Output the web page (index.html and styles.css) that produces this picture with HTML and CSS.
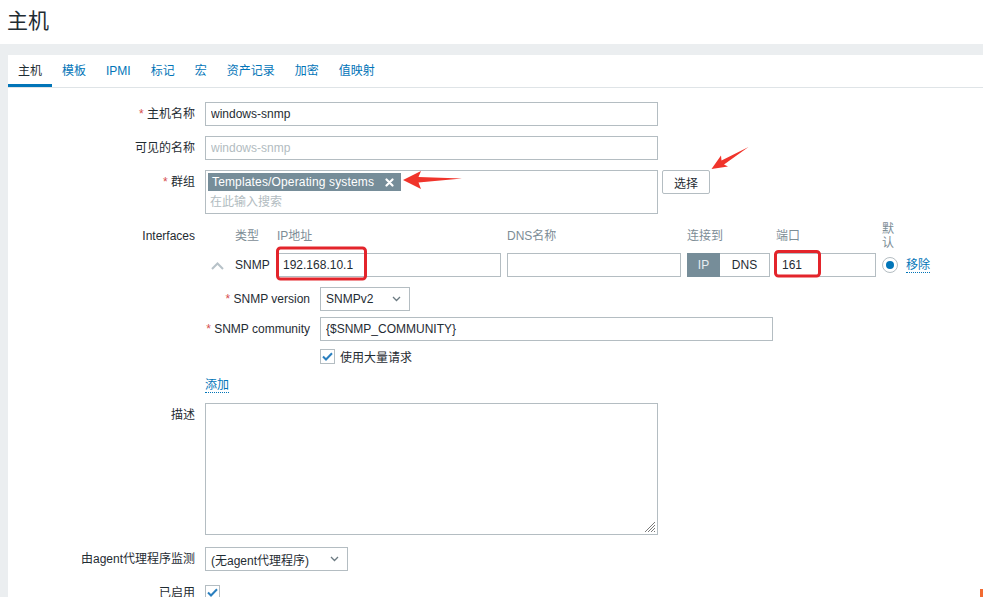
FILE: index.html
```html
<!DOCTYPE html>
<html lang="zh-CN">
<head>
    <meta charset="UTF-8">
    <meta name="viewport" content="width=device-width, initial-scale=1.0">
    <title>主机</title>
    <link rel="stylesheet" href="styles.css">
</head>
<body>
    <header class="page-header">
        <h1>主机</h1>
    </header>
    <main class="page-body">
        <div class="panel">
            <ul class="tabs">
                <li class="tab active">主机</li>
                <li class="tab">模板</li>
                <li class="tab">IPMI</li>
                <li class="tab">标记</li>
                <li class="tab">宏</li>
                <li class="tab">资产记录</li>
                <li class="tab">加密</li>
                <li class="tab">值映射</li>
            </ul>
            <form class="host-form">
                <label class="form-label"><span class="req">*</span> 主机名称</label>
                <div class="form-field">
                    <input class="text-input wide" type="text" value="windows-snmp">
                </div>

                <label class="form-label">可见的名称</label>
                <div class="form-field">
                    <input class="text-input wide" type="text" placeholder="windows-snmp">
                </div>

                <label class="form-label"><span class="req">*</span> 群组</label>
                <div class="form-field group-field">
                    <div class="multiselect">
                        <span class="ms-tag">Templates/Operating systems
                            <svg class="ms-remove" width="9" height="9" viewBox="0 0 9 9"><path d="M1.5 1.5 L7.5 7.5 M7.5 1.5 L1.5 7.5" stroke="#fff" stroke-width="2.2" stroke-linecap="round"/></svg>
                        </span>
                        <input class="ms-search" type="text" placeholder="在此输入搜索">
                    </div>
                    <button class="btn" type="button">选择</button>
                </div>

                <label class="form-label">Interfaces</label>
                <div class="form-field interfaces">
                    <div class="iface-grid">
                        <span class="iface-head"></span>
                        <span class="iface-head">类型</span>
                        <span class="iface-head">IP地址</span>
                        <span class="iface-head">DNS名称</span>
                        <span class="iface-head">连接到</span>
                        <span class="iface-head">端口</span>
                        <span class="iface-head narrow">默认</span>
                        <span class="iface-head"></span>

                        <span class="caret">
                            <svg width="13" height="8" viewBox="0 0 13 8"><path d="M1 7 L6.5 1.5 L12 7" fill="none" stroke="#b7c2c8" stroke-width="2"/></svg>
                        </span>
                        <span class="iface-type">SNMP</span>
                        <input class="text-input" type="text" value="192.168.10.1">
                        <input class="text-input" type="text" value="">
                        <div class="toggle">
                            <span class="toggle-item on">IP</span>
                            <span class="toggle-item">DNS</span>
                        </div>
                        <input class="text-input" type="text" value="161">
                        <span class="radio"><span class="radio-dot"></span></span>
                        <a class="link">移除</a>
                    </div>

                    <div class="snmp-details">
                        <label class="form-label"><span class="req">*</span> SNMP version</label>
                        <div class="select version-select">
                            <span>SNMPv2</span>
                            <svg width="9" height="6" viewBox="0 0 9 6"><path d="M1 1 L4.5 4.5 L8 1" fill="none" stroke="#6b7a82" stroke-width="1.3"/></svg>
                        </div>

                        <label class="form-label"><span class="req">*</span> SNMP community</label>
                        <input class="text-input community" type="text" value="{$SNMP_COMMUNITY}">

                        <span></span>
                        <div class="check-row">
                            <span class="checkbox">
                                <svg width="11" height="9" viewBox="0 0 11 9"><path d="M1 4.5 L4 7.5 L10 1.2" fill="none" stroke="#2a7fbf" stroke-width="2"/></svg>
                            </span>
                            <span>使用大量请求</span>
                        </div>
                    </div>

                    <a class="link add-link">添加</a>
                </div>

                <label class="form-label">描述</label>
                <div class="form-field desc-field">
                    <div class="textarea-wrap">
                        <textarea class="textarea"></textarea>
                        <svg class="resize-grip" width="12" height="12" viewBox="0 0 12 12">
                            <path d="M11 1 L1 11 M11 4 L4 11 M11 7 L7 11 M11 10 L10 11" stroke="#7a7a7a" stroke-width="1"/>
                        </svg>
                    </div>
                </div>

                <label class="form-label">由agent代理程序监测</label>
                <div class="form-field">
                    <div class="select proxy-select">
                        <span>(无agent代理程序)</span>
                        <svg width="9" height="6" viewBox="0 0 9 6"><path d="M1 1 L4.5 4.5 L8 1" fill="none" stroke="#6b7a82" stroke-width="1.3"/></svg>
                    </div>
                </div>

                <label class="form-label">已启用</label>
                <div class="form-field enabled-field">
                    <span class="checkbox">
                        <svg width="11" height="9" viewBox="0 0 11 9"><path d="M1 4.5 L4 7.5 L10 1.2" fill="none" stroke="#2a7fbf" stroke-width="2"/></svg>
                    </span>
                </div>
            </form>
        </div>
    </main>

    <!-- red markup drawn over the screenshot -->
    <svg class="annotations" width="983" height="597" viewBox="0 0 983 597">
        <rect x="277.5" y="248" width="88" height="31" rx="3" fill="none" stroke="#e3242b" stroke-width="3"/>
        <rect x="775.5" y="251.5" width="44" height="24.5" rx="3" fill="none" stroke="#e3242b" stroke-width="3"/>
        <polygon points="403,180 421,171 418.5,177 462,178.5 418.5,182.5 421,189" fill="#f0342b"/>
        <polygon points="711.5,169 721,155.5 721.5,160.5 748.5,147 724,164.5 728,166.5" fill="#f0342b"/>
        <rect x="980" y="589" width="3" height="8" fill="#f26b32"/>
    </svg>
</body>
</html>
```

FILE: styles.css
```css
:root {
    --text-color: #1f2c33;
    --link-color: #0275b8;
    --muted-color: #7d8d96;
    --border-color: #b4bdc2;
    --page-bg: #ebeef0;
    --tag-bg: #768d99;
    --req-color: #d64e4e;
}

body {
    margin: 0;
    background: var(--page-bg);
    font-family: 'Liberation Sans', Arial, 'Noto Sans CJK SC', sans-serif;
    font-size: 12px;
    color: var(--text-color);
    overflow: hidden;
}

.page-header {
    background: #fff;
    height: 44px;
    padding-left: 7px;
}

.page-header h1 {
    margin: 0;
    font-size: 21px;
    font-weight: normal;
    line-height: 42px;
}

.page-body {
    padding: 11px 0 0 8px;
}

.panel {
    background: #fff;
    min-height: 560px;
}

.tabs {
    display: flex;
    list-style: none;
    margin: 0;
    padding: 0;
    height: 32px;
    border-bottom: 1px solid #dfe4e7;
}

.tab {
    padding: 0 10px;
    line-height: 32px;
    color: var(--link-color);
}

.tab.active {
    color: var(--text-color);
    box-shadow: inset 0 -3px 0 var(--link-color);
}

.host-form {
    display: grid;
    grid-template-columns: 187px 1fr;
    column-gap: 10px;
    row-gap: 10px;
    padding-top: 14px;
}

.form-label {
    text-align: right;
    padding-top: 4px;
    line-height: 16px;
    white-space: nowrap;
}

.req {
    color: var(--req-color);
}

.form-field {
    min-width: 0;
}

.text-input {
    box-sizing: border-box;
    height: 24px;
    border: 1px solid var(--border-color);
    padding: 0 5px;
    font: inherit;
    color: var(--text-color);
    background: #fff;
    outline: none;
    width: 100%;
}

.text-input::placeholder,
.ms-search::placeholder {
    color: #b2bcc1;
}

.text-input.wide {
    width: 453px;
}

.group-field {
    display: flex;
    align-items: flex-start;
    gap: 4px;
}

.multiselect {
    box-sizing: border-box;
    width: 453px;
    height: 44px;
    border: 1px solid var(--border-color);
    padding: 2px;
    display: flex;
    flex-direction: column;
    align-items: flex-start;
}

.ms-tag {
    display: inline-flex;
    align-items: center;
    gap: 11px;
    height: 18px;
    padding: 0 7px 0 4px;
    background: var(--tag-bg);
    color: #fff;
    line-height: 18px;
    letter-spacing: 0.15px;
}

.ms-search {
    border: none;
    outline: none;
    font: inherit;
    padding: 4px 0 0 2px;
    width: 300px;
}

.btn {
    box-sizing: border-box;
    height: 24px;
    width: 48px;
    border: 1px solid var(--border-color);
    background: #fff;
    font: inherit;
    color: var(--text-color);
    padding: 0;
    border-radius: 2px;
}

.interfaces {
    display: flex;
    flex-direction: column;
    align-items: flex-start;
}

.iface-grid {
    display: grid;
    grid-template-columns: 24px 36px 224px 174px 83px 100px 18px auto;
    grid-template-rows: 28px 24px;
    column-gap: 6px;
    row-gap: 1px;
    align-items: center;
}

.iface-head {
    align-self: start;
    padding-top: 4px;
    line-height: 16px;
    color: var(--muted-color);
    white-space: nowrap;
}

.iface-head.narrow {
    white-space: normal;
    line-height: 14px;
    padding-top: 0;
    margin-top: -2px;
    width: 14px;
}

.caret {
    display: flex;
    justify-content: center;
    padding-top: 2px;
}

.toggle {
    display: flex;
    height: 24px;
    box-sizing: border-box;
    border: 1px solid var(--border-color);
}

.toggle-item {
    flex: 1;
    text-align: center;
    line-height: 22px;
}

.toggle-item.on {
    flex: 0 0 33px;
    background: var(--tag-bg);
    color: #e8eef1;
    margin: -1px 0 -1px -1px;
    line-height: 24px;
}

.radio {
    box-sizing: border-box;
    width: 16px;
    height: 16px;
    border: 1px solid var(--border-color);
    border-radius: 50%;
    display: flex;
    align-items: center;
    justify-content: center;
}

.radio-dot {
    width: 8px;
    height: 8px;
    border-radius: 50%;
    background: var(--link-color);
}

.link {
    color: var(--link-color);
    border-bottom: 1px dotted var(--link-color);
    line-height: 14px;
    justify-self: start;
}

.snmp-details {
    display: grid;
    grid-template-columns: 105px auto;
    column-gap: 10px;
    row-gap: 6px;
    margin-top: 10px;
    align-items: center;
}

.snmp-details .form-label {
    padding-top: 0;
}

.select {
    box-sizing: border-box;
    height: 24px;
    border: 1px solid var(--border-color);
    padding: 0 8px 0 5px;
    display: flex;
    align-items: center;
    justify-content: space-between;
    background: #fff;
}

.version-select {
    width: 90px;
}

.proxy-select {
    width: 143px;
}

.community {
    width: 453px;
}

.check-row {
    display: flex;
    align-items: center;
    gap: 5px;
    margin-top: 1px;
}

.checkbox {
    box-sizing: border-box;
    width: 15px;
    height: 15px;
    border: 1px solid var(--border-color);
    display: flex;
    align-items: center;
    justify-content: center;
    background: #fff;
}

.add-link {
    margin-top: 13px;
}

.desc-field {
    padding-bottom: 2px;
}

.textarea-wrap {
    position: relative;
    width: 453px;
}

.textarea {
    display: block;
    box-sizing: border-box;
    width: 453px;
    height: 132px;
    border: 1px solid var(--border-color);
    font: inherit;
    margin: 0;
    resize: none;
}

.resize-grip {
    position: absolute;
    right: 2px;
    bottom: 2px;
}

.enabled-field {
    padding-top: 4px;
}

.annotations {
    position: absolute;
    top: 0;
    left: 0;
    pointer-events: none;
}
```
